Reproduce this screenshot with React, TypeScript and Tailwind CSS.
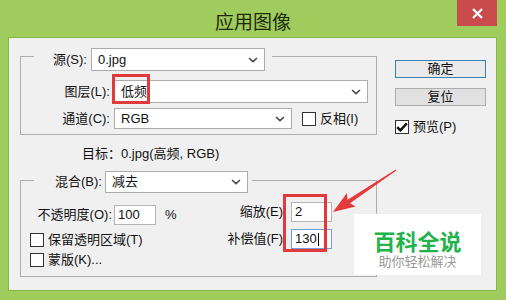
import React from 'react';

// ── Small controls ───────────────────────────────────────────────────────────
function Chevron() {
  return (
    <svg width="10" height="6" viewBox="0 0 10 6" className="shrink-0">
      <path d="M1 1l4 3.6L9 1" fill="none" stroke="#4a4a4a" strokeWidth="1.6" />
    </svg>
  );
}

function Select({ value, className }: { value: string; className: string }) {
  return (
    <div className={`flex items-center justify-between border border-[#acacac] bg-white pl-[6px] pr-[6px] ${className}`}>
      <span>{value}</span>
      <Chevron />
    </div>
  );
}

function Check({ checked = false }: { checked?: boolean }) {
  return (
    <span className="flex h-[14px] w-[14px] shrink-0 items-center justify-center border border-[#333] bg-white">
      {checked && (
        <svg width="12" height="10" viewBox="0 0 12 10">
          <path d="M1.2 5.2l3.2 3.2L10.8 1.4" fill="none" stroke="#111" strokeWidth="2.4" />
        </svg>
      )}
    </span>
  );
}

function Field({ value, focused = false }: { value: string; focused?: boolean }) {
  return (
    <div
      className={`flex h-[20px] w-[41px] items-center border bg-white pl-[3px] ${
        focused ? 'border-[#6f9fd6]' : 'border-[#b4b4b4]'
      }`}
    >
      <span>{value}</span>
      {focused && <span className="ml-px h-[13px] w-px bg-black" />}
    </div>
  );
}

// ── Dialog ───────────────────────────────────────────────────────────────────
export default function App() {
  return (
    <div className="relative h-[300px] w-[506px] overflow-hidden bg-[#a0cb5d] font-['Liberation_Sans','Noto_Sans_CJK_SC',sans-serif] text-[13px] leading-[16px] text-[#111]">
      {/* title bar */}
      <div className="relative flex h-[37px] items-center justify-center pt-[3px]">
        <span className="font-['Noto_Sans_CJK_SC',sans-serif] text-[19px] leading-none text-[#1c2a0c]">应用图像</span>
        <div className="absolute right-[9px] top-0 flex h-[26px] w-[40px] items-center justify-center bg-[#c94b4b]">
          <svg width="11" height="11" viewBox="0 0 11 11">
            <path d="M1 1l9 9M10 1l-9 9" stroke="#fff" strokeWidth="2.2" />
          </svg>
        </div>
      </div>

      {/* client area */}
      <div className="ml-[8px] flex h-[254px] w-[489px] border border-[#86b64a] bg-[#f0f0f0]">
        {/* left column */}
        <div className="w-[368px] pl-[11px] pt-[18px]">
          {/* source group */}
          <div className="h-[79px] w-[357px] border border-[#adadad]">
            <div className="-mt-[9px] ml-[13px] flex w-fit items-center bg-[#f0f0f0] pl-[19px] pr-[7px]">
              <span className="mr-[4px]">源(S):</span>
              <Select value="0.jpg" className="h-[23px] w-[174px]" />
            </div>
            <div className="mt-[9px] flex items-center">
              <span className="w-[89px] text-right">图层(L):</span>
              <Select value="低频" className="ml-[4px] h-[23px] w-[254px]" />
            </div>
            <div className="mt-[5px] flex items-center">
              <span className="w-[89px] text-right">通道(C):</span>
              <Select value="RGB" className="ml-[4px] h-[21px] w-[178px]" />
              <span className="ml-[10px]">
                <Check />
              </span>
              <span className="ml-[4px]">反相(I)</span>
            </div>
          </div>

          <div className="mt-[11px] pl-[62px]">目标：0.jpg(高频, RGB)</div>

          {/* blending group */}
          <div className="mt-[18px] h-[97px] w-[357px] border border-[#adadad]">
            <div className="-mt-[10px] ml-[13px] flex w-fit items-center bg-[#f0f0f0] pl-[21px] pr-[4px]">
              <span className="mr-[3px]">混合(B):</span>
              <Select value="减去" className="h-[22px] w-[143px]" />
            </div>
            <div className="flex">
              <div className="w-[199px]">
                <div className="mt-[12px] flex items-center">
                  <span className="w-[91px] text-right">不透明度(O):</span>
                  <div className="ml-[2px] flex h-[20px] w-[42px] items-center border border-[#b4b4b4] bg-white pl-[3px]">100</div>
                  <span className="ml-[9px]">%</span>
                </div>
                <div className="mt-[7px] flex items-center pl-[9px]">
                  <Check />
                  <span className="ml-[4px]">保留透明区域(T)</span>
                </div>
                <div className="mt-[4px] flex items-center pl-[9px]">
                  <Check />
                  <span className="ml-[4px]">蒙版(K)...</span>
                </div>
              </div>
              <div>
                <div className="mt-[9px] flex items-center">
                  <span className="w-[63px] text-right">缩放(E)</span>
                  <div className="ml-[8px]">
                    <Field value="2" />
                  </div>
                </div>
                <div className="mt-[7px] flex items-center">
                  <span className="w-[63px] text-right">补偿值(F)</span>
                  <div className="ml-[8px]">
                    <Field value="130" focused />
                  </div>
                </div>
              </div>
            </div>
          </div>
        </div>

        {/* right column */}
        <div className="ml-[18px] flex flex-col pt-[22px]">
          <div className="flex h-[18px] w-[91px] items-center justify-center border border-[#3c7fb1] bg-[#e9e9e9]">确定</div>
          <div className="mt-[10px] flex h-[18px] w-[91px] items-center justify-center border border-[#adadad] bg-[#e1e1e1]">复位</div>
          <div className="mt-[13px] flex items-center">
            <Check checked />
            <span className="ml-[4px]">预览(P)</span>
          </div>
        </div>
      </div>

      {/* annotations */}
      <div className="absolute left-[112px] top-[74px] h-[30px] w-[38px] border-[3px] border-[#e03a3c]" />
      <div className="absolute left-[283px] top-[194px] h-[58px] w-[44px] border-[3px] border-[#e03a3c]" />
      <svg className="pointer-events-none absolute left-0 top-0" width="506" height="300">
        <polygon
          points="333,212 355.7,206.5 350,203.3 396.3,170.5 395.7,169.5 347.6,199.7 346.9,193.1"
          fill="#e5393b"
        />
      </svg>

      {/* watermark */}
      <div className="absolute left-[354px] top-[214px] flex h-[61px] w-[127px] flex-col items-center bg-white pt-[15px]">
        <span className="font-['Noto_Sans_CJK_SC',sans-serif] text-[22px] font-bold leading-[22px] text-[#22b24a]">百科全说</span>
        <span className="mt-[3px] font-['Noto_Sans_CJK_SC',sans-serif] text-[13px] leading-[14px] text-[#9a9a9a]">助你轻松解决</span>
      </div>
    </div>
  );
}
